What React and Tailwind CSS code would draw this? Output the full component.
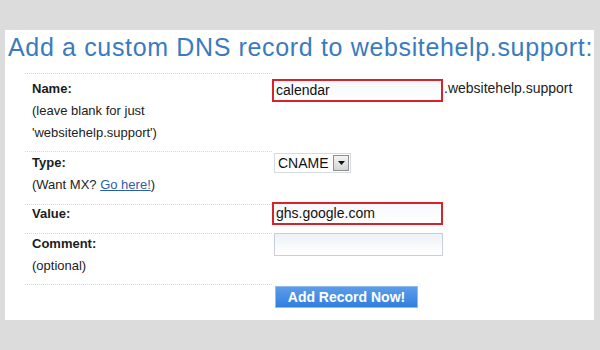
/**
 * DnsRecordForm
 *
 * "Add a custom DNS record" panel with highlighted inputs
 */

function RedField({ value }) {
  return (
    <div className="w-[171px] h-[23px] border-2 border-[#d8222c] bg-gradient-to-b from-[#f6f8fb] to-white pl-[2px] text-[14px] leading-[19px] text-[#111]">
      {value}
    </div>
  )
}

function Label({ children }) {
  return <div className="font-bold text-[#1c1c1c]">{children}</div>
}

export default function App() {
  const cell = "border-t border-dotted border-[#d6d6d6] pl-[7px]"

  return (
    <div
      className="w-[600px] h-[350px] bg-[#dcdcdc] pt-[30px] pl-[5px] overflow-hidden"
      style={{ fontFamily: '"Liberation Sans", Arial, sans-serif' }}
    >
      <div className="w-[589px] h-[290px] bg-white">
        {/* Title */}
        <h1 className="pt-[2px] pl-[3px] text-[25px] leading-[30px] tracking-[0.65px] text-[#3a7bbf] whitespace-nowrap">
          Add a custom DNS record to websitehelp.support:
        </h1>

        {/* Form table */}
        <div className="mt-[11px] ml-[20px] grid grid-cols-[247px_1fr] text-[13px] text-[#222]">
          {/* Name */}
          <div className={`${cell} pt-[4px] pb-[7px] leading-[22px]`}>
            <Label>Name:</Label>
            <div>(leave blank for just</div>
            <div>'websitehelp.support')</div>
          </div>
          <div className="pt-[6px] flex items-start">
            <RedField value="calendar" />
            <span className="ml-[1px] text-[14px] leading-[19px] text-[#222]">.websitehelp.support</span>
          </div>

          {/* Type */}
          <div className={`${cell} pb-[8px] leading-[22px]`}>
            <Label>Type:</Label>
            <div>
              (Want MX?{" "}
              <a href="#" className="text-[#2b5ea8] underline">Go here!</a>)
            </div>
          </div>
          <div className="pt-[2px] pl-[2px]">
            <div className="w-[77px] h-[20px] border border-[#d6dbe2] bg-white flex items-center justify-between pl-[3px] pr-[1px]">
              <span className="text-[14px] leading-[18px] text-[#111]">CNAME</span>
              <span className="w-[16px] h-[16px] border border-[#8f8f8f] bg-gradient-to-b from-[#f4f4f4] to-[#d4d4d4] flex items-center justify-center">
                <svg width="7" height="4" viewBox="0 0 7 4">
                  <path d="M0 0h7L3.5 4z" fill="#111" />
                </svg>
              </span>
            </div>
          </div>

          {/* Value */}
          <div className={`${cell} pt-[1px] pb-[11px] leading-[16px]`}>
            <Label>Value:</Label>
          </div>
          <div className="-mt-[2px]">
            <RedField value="ghs.google.com" />
          </div>

          {/* Comment */}
          <div className={`${cell} pb-[6px]`}>
            <div className="leading-[20px]">
              <Label>Comment:</Label>
            </div>
            <div className="leading-[24px]">(optional)</div>
          </div>
          <div className="pl-[2px]">
            <div className="w-[169px] h-[23px] border border-[#c7cfd9] bg-gradient-to-b from-[#eef2f6] to-white" />
          </div>

          {/* Submit */}
          <div className={cell} />
          <div className="pt-[2px] pl-[3px]">
            <button className="w-[143px] h-[22px] border border-[#93bbec] bg-gradient-to-b from-[#5c9de9] to-[#2f7ee0] text-white font-bold text-[14px] leading-[20px]">
              Add Record Now!
            </button>
          </div>
        </div>
      </div>
    </div>
  )
}
